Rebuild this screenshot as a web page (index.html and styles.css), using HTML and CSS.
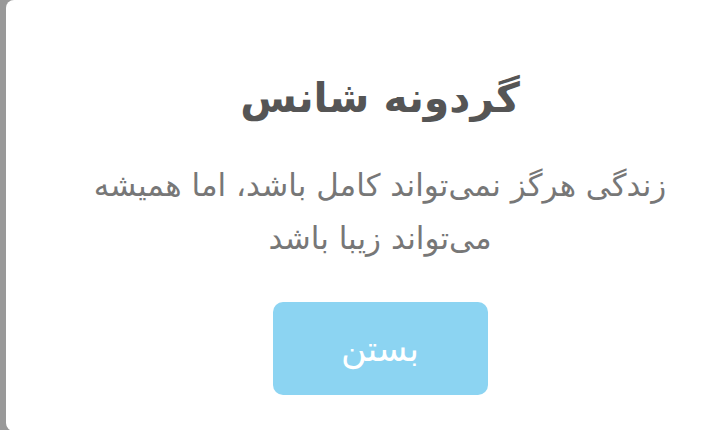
FILE: index.html
```html
<!DOCTYPE html>
<html lang="fa" dir="rtl">
<head>
<meta charset="utf-8">
<link rel="stylesheet" href="styles.css">
</head>
<body>
<div class="page">
  <div class="card">
    <h1 class="title">گردونه شانس</h1>
    <p class="message">زندگی هرگز نمی‌تواند کامل باشد، اما همیشه<br>می‌تواند زیبا باشد</p>
    <button class="close-btn">بستن</button>
  </div>
</div>
</body>
</html>
```
FILE: styles.css
```css
html, body {
  margin: 0;
  padding: 0;
  width: 720px;
  height: 430px;
  overflow: hidden;
  background: #999999;
}
.page {
  display: flex;
  direction: ltr;
  padding-left: 6px;
  height: 430px;
}
.card {
  direction: rtl;
  flex: 0 0 748px;
  height: 431px;
  background: #ffffff;
  border-radius: 8px;
  display: flex;
  flex-direction: column;
  align-items: center;
  font-family: "DejaVu Sans", sans-serif;
}
.title {
  margin: 68px 0 0;
  font-size: 41px;
  font-weight: bold;
  color: #555555;
  line-height: 60px;
}
.message {
  margin: 31px 0 0;
  font-size: 31px;
  line-height: 53px;
  color: #777777;
  text-align: center;
}
.close-btn {
  margin-top: 37px;
  width: 215px;
  height: 93px;
  border: none;
  border-radius: 10px;
  background: #8cd4f2;
  color: #ffffff;
  font-family: "DejaVu Sans", sans-serif;
  font-size: 35px;
}
```
